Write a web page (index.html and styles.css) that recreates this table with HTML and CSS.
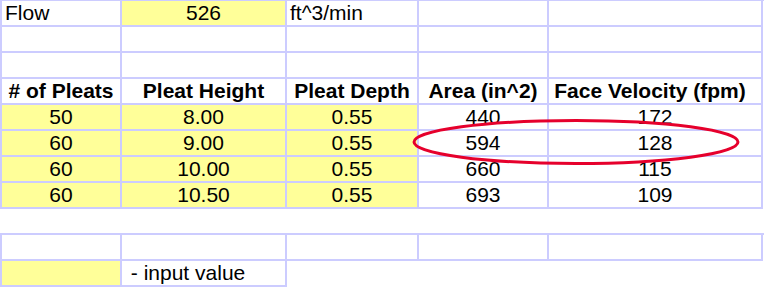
FILE: index.html
```html
<!DOCTYPE html>
<html>
<head>
<meta charset="utf-8">
<link rel="stylesheet" href="styles.css">
</head>
<body>
<div class="page">
  <div class="block first">
    <div class="row">
      <div class="cell c1 left">Flow</div>
      <div class="cell c2 input">526</div>
      <div class="cell c3 left">ft^3/min</div>
      <div class="cell c4"></div>
      <div class="cell c5"></div>
    </div>
    <div class="row">
      <div class="cell c1"></div><div class="cell c2"></div><div class="cell c3"></div><div class="cell c4"></div><div class="cell c5"></div>
    </div>
    <div class="row">
      <div class="cell c1"></div><div class="cell c2"></div><div class="cell c3"></div><div class="cell c4"></div><div class="cell c5"></div>
    </div>
    <div class="row head">
      <div class="cell c1"># of Pleats</div>
      <div class="cell c2">Pleat Height</div>
      <div class="cell c3">Pleat Depth</div>
      <div class="cell c4">Area (in^2)</div>
      <div class="cell c5 shift">Face Velocity (fpm)</div>
    </div>
    <div class="row">
      <div class="cell c1 input">50</div><div class="cell c2 input">8.00</div><div class="cell c3 input">0.55</div><div class="cell c4">440</div><div class="cell c5">172</div>
    </div>
    <div class="row">
      <div class="cell c1 input">60</div><div class="cell c2 input">9.00</div><div class="cell c3 input">0.55</div><div class="cell c4">594</div><div class="cell c5">128</div>
    </div>
    <div class="row">
      <div class="cell c1 input">60</div><div class="cell c2 input">10.00</div><div class="cell c3 input">0.55</div><div class="cell c4">660</div><div class="cell c5">115</div>
    </div>
    <div class="row">
      <div class="cell c1 input">60</div><div class="cell c2 input">10.50</div><div class="cell c3 input">0.55</div><div class="cell c4">693</div><div class="cell c5">109</div>
    </div>
  </div>
  <div class="spacer"></div>
  <div class="block second">
    <div class="row">
      <div class="cell c1"></div><div class="cell c2"></div><div class="cell c3"></div><div class="cell c4"></div><div class="cell c5"></div>
    </div>
    <div class="row short">
      <div class="cell c1 input"></div>
      <div class="cell c2 left legend"> - input value</div>
    </div>
  </div>
  <svg class="circle" width="340" height="54" viewBox="0 0 340 54">
    <ellipse cx="170" cy="27" rx="162" ry="21.5" fill="none" stroke="#e6002c" stroke-width="3"/>
  </svg>
</div>
</body>
</html>
```
FILE: styles.css
```css
html, body {
  margin: 0;
  padding: 0;
  background: #ffffff;
}
.page {
  position: relative;
  width: 764px;
  height: 289px;
  font-family: "Liberation Sans", Arial, sans-serif;
  font-size: 21px;
  color: #000;
}
.block {
  display: flex;
  flex-direction: column;
  align-items: flex-start;
}
.first {
  border-top: 2px solid #ccccff;
  margin-top: -1px;
}
.second {
  border-top: 2px solid #ccccff;
}
.row {
  display: flex;
  border-left: 2px solid #ccccff;
}
.cell {
  box-sizing: border-box;
  height: 26px;
  line-height: 24px;
  border-right: 2px solid #ccccff;
  border-bottom: 2px solid #ccccff;
  text-align: center;
  white-space: pre;
  overflow: visible;
}
.left {
  text-align: left;
  padding-left: 3px;
}
.input {
  background: #ffff99;
}
.head .cell {
  font-weight: bold;
}
.shift {
  padding-right: 10px;
}
.c1 { width: 120px; }
.c2 { width: 165px; }
.c3 { width: 132px; }
.c4 { width: 130px; }
.c5 { width: 214px; }
.spacer {
  height: 24px;
}
.circle {
  position: absolute;
  left: 406px;
  top: 116px;
}
```
